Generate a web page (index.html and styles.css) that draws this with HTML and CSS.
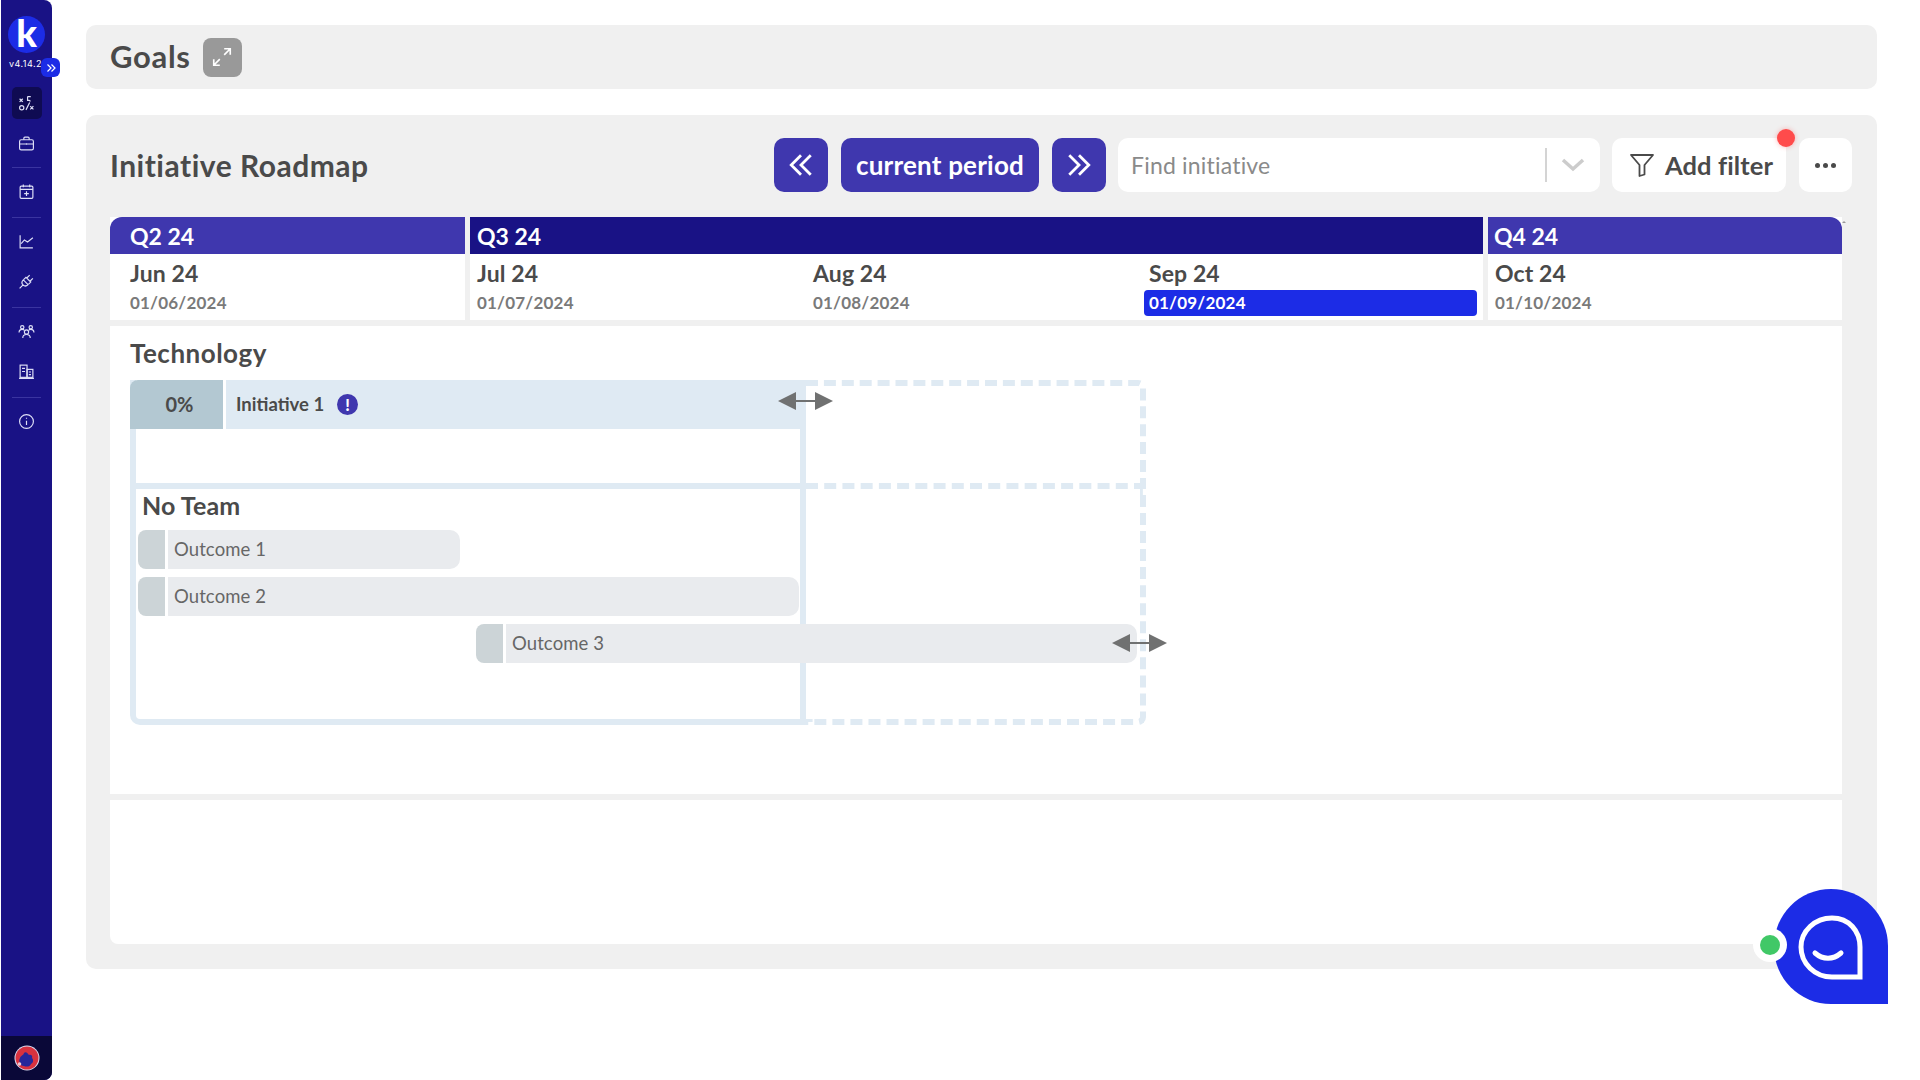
FILE: index.html
```html
<!DOCTYPE html>
<html lang="en">
<head>
<meta charset="utf-8">
<title>Goals</title>
<link rel="stylesheet" href="styles.css">
</head>
<body>
<div class="app">
  <nav class="sidebar">
    <div class="logo"><span>k</span></div>
    <div class="version">v4.14.2</div>
    <div class="collapse-tab"><svg viewBox="0 0 12 12" width="12" height="12"><path d="M2.500 2.500 6 6l-3.500 3.500M6.500 2.500 10 6l-3.500 3.500" fill="none" stroke="#fff" stroke-width="1.200"/></svg></div>
    <div class="nav-list">
      <div class="nav-item active"><svg class="nav-icon" viewBox="0 0 16 16"><path d="M1.500 3.500l3 3M4.500 3.500l-3 3M11.500 10.500l3 3M14.500 10.500l-3 3M7.500 14 11 7M9 1.500h3M9 1.500v3.500h1.500a1 1 0 0 1 1 1" /><circle cx="3.500" cy="12" r="2"/></svg></div>
      <div class="nav-item"><svg class="nav-icon" viewBox="0 0 16 16"><rect x="1.500" y="4.500" width="13" height="9.500" rx="1.500"/><path d="M5.500 4.500V3a1 1 0 0 1 1-1h3a1 1 0 0 1 1 1v1.500M1.500 8.500h13M8 7.800v1.400"/></svg></div>
      <div class="divider"></div>
      <div class="nav-item"><svg class="nav-icon" viewBox="0 0 16 16"><rect x="2" y="3" width="12" height="11.500" rx="1"/><path d="M2 6h12M5 1.500V4M11 1.500V4M8 7.800v4.400M5.800 10h4.400"/></svg></div>
      <div class="divider wide"></div>
      <div class="nav-item"><svg class="nav-icon" viewBox="0 0 16 16"><path d="M2 2v12h12M3 10l3-3.500 3 2L14 4.500"/></svg></div>
      <div class="nav-item"><svg class="nav-icon" viewBox="0 0 16 16"><path d="M1.500 14.500 5 11M5 6.500 9.500 11c-1.500 1.500-3.500 1.500-4.800.2C3.500 10 3.500 8 5 6.500zM5.500 6l2-2 4.500 4.500-2 2M8.500 4.500 11 2M11.500 7.500 14 5"/></svg></div>
      <div class="divider wide"></div>
      <div class="nav-item"><svg class="nav-icon" viewBox="0 0 16 16"><circle cx="8" cy="8.500" r="2"/><circle cx="4" cy="4" r="1.600"/><circle cx="12" cy="4" r="1.600"/><path d="M1 9c0-2 1.200-3 3-3 .8 0 1.400.2 1.800.6M15 9c0-2-1.200-3-3-3-.8 0-1.400.2-1.800.6M4.500 14c0-2 1.500-3.200 3.500-3.200s3.500 1.200 3.500 3.200"/></svg></div>
      <div class="nav-item"><svg class="nav-icon" viewBox="0 0 16 16"><rect x="2" y="2" width="6.500" height="11.500"/><rect x="8.500" y="6" width="5.500" height="7.500"/><path d="M1 14.500h14M3.800 5h2.800M3.800 8h2.800M10.200 8.500h2M10.200 11h2"/></svg></div>
      <div class="divider wide"></div>
      <div class="nav-item"><svg class="nav-icon" viewBox="0 0 16 16"><circle cx="8" cy="8" r="6.500"/><path d="M8 7.200v4M8 4.500v1"/></svg></div>
    </div>
    <div class="sidebar-foot">
      <svg viewBox="0 0 26 26" width="26" height="26"><circle cx="13" cy="13" r="12.500" fill="#d9dcf2"/><circle cx="13" cy="13" r="11.500" fill="#d8323f"/><path d="M6 13c1-3 3-2 4-5 2-2 4 1 5 2 2-1 4 1 3 3 2 2 1 5-1 6-1 3-5 3-7 2-2 0-4-1-4-3-1-2-1-3 0-5z" fill="#27279b"/><circle cx="5.500" cy="19" r="1.800" fill="#f0c8d0"/></svg>
    </div>
  </nav>

  <main class="content">
    <header class="goals-card">
      <h1 class="goals-title">Goals</h1>
      <button class="expand-btn"><svg viewBox="0 0 20 20" width="22" height="22"><path d="M2.500 17.500 8 12M12 8l5.500-5.500M12 2.500h5.500V8M2.500 12v5.500H8" fill="none" stroke="#fff" stroke-width="1.500"/></svg></button>
    </header>

    <section class="panel">
      <div class="toolbar">
        <h2 class="panel-title">Initiative Roadmap</h2>
        <button class="period-btn square"><svg viewBox="0 0 24 24" width="26" height="26"><path d="M12 3 3 12l9 9M21 3l-9 9 9 9" fill="none" stroke="#fff" stroke-width="2.600"/></svg></button>
        <button class="period-btn">current period</button>
        <button class="period-btn square"><svg viewBox="0 0 24 24" width="26" height="26"><path d="M3 3l9 9-9 9M12 3l9 9-9 9" fill="none" stroke="#fff" stroke-width="2.600"/></svg></button>
        <div class="find">
          <span class="find-text">Find initiative</span>
          <span class="find-sep"></span>
          <svg viewBox="0 0 24 14" width="24" height="14"><path d="M2 2l10 9 10-9" fill="none" stroke="#cccccc" stroke-width="3.500"/></svg>
        </div>
        <button class="white-btn filter"><svg viewBox="0 0 26 26" width="26" height="26"><path d="M2 3h22l-8.500 10v9.500l-5 1.500V13z" fill="none" stroke="#4a4a4a" stroke-width="1.800" stroke-linejoin="round"/></svg>Add filter<span class="red-dot"></span></button>
        <button class="white-btn more"><span></span><span></span><span></span></button>
      </div>

      <div class="timeline">
        <div class="quarter">
          <div class="q-head light first">Q2 24</div>
          <div class="months">
            <div class="month"><div class="m-name">Jun 24</div><div class="m-date">01/06/2024</div></div>
          </div>
        </div>
        <div class="quarter">
          <div class="q-head">Q3 24</div>
          <div class="months">
            <div class="month"><div class="m-name">Jul 24</div><div class="m-date">01/07/2024</div></div>
            <div class="month"><div class="m-name">Aug 24</div><div class="m-date">01/08/2024</div></div>
            <div class="month"><div class="m-name">Sep 24</div><div class="m-date now">01/09/2024</div></div>
          </div>
        </div>
        <div class="quarter">
          <div class="q-head light last">Q4 24</div>
          <div class="months">
            <div class="month"><div class="m-name">Oct 24</div><div class="m-date">01/10/2024</div></div>
          </div>
        </div>
        <span class="scroll-mark"></span>
      </div>

      <div class="lane">
        <h3 class="lane-title">Technology</h3>
        <div class="frame">
          <div class="cell solid top">
            <div class="initiative">
              <div class="pct">0%</div>
              <div class="init-body">Initiative 1 <span class="alert">!</span></div>
              <svg class="resize" viewBox="0 0 55 20"><path d="M0 10 18 1v8h19V1l18 9-18 9v-8H18v8z" fill="#707171"/></svg>
            </div>
          </div>
          <div class="cell dashed top-d"></div>
          <div class="cell solid bottom">
            <div class="team">No Team</div>
            <div class="outcome o1"><div class="o-tab"></div><div class="o-body">Outcome 1</div></div>
            <div class="outcome o2"><div class="o-tab"></div><div class="o-body">Outcome 2</div></div>
            <div class="outcome o3"><div class="o-tab"></div><div class="o-body">Outcome 3</div>
              <svg class="resize" viewBox="0 0 55 20"><path d="M0 10 18 1v8h19V1l18 9-18 9v-8H18v8z" fill="#707171"/></svg>
            </div>
          </div>
          <div class="cell dashed bottom-d"></div>
        </div>
      </div>
      <div class="lane-empty"></div>
    </section>
  </main>

  <div class="chat">
    <svg viewBox="0 0 114 115" width="114" height="115"><path d="M27 58a31 29 0 0 1 31-29c17 0 28 13 28 29v30H58a31 30 0 0 1-31-30z" fill="none" stroke="#fff" stroke-width="5"/><path d="M41 64c8 7 18 7 26 0" fill="none" stroke="#fff" stroke-width="5" stroke-linecap="round"/></svg>
    <span class="chat-dot"></span>
  </div>
</div>
</body>
</html>
```
FILE: styles.css
```css
* { box-sizing: border-box; }
html, body { margin: 0; height: 100%; background: #fff; }
body { font-family: "Lato", "Open Sans", sans-serif; color: #4a4a4a; overflow: hidden; }
h1, h2, h3 { margin: 0; }
button { font: inherit; border: 0; padding: 0; }

.app { display: flex; height: 1080px; position: relative; padding-left: 1px; }

/* Sidebar */
.sidebar { width: 51px; flex: none; background: #191285; border-radius: 0 8px 8px 0; display: flex; flex-direction: column; align-items: center; position: relative; padding-top: 16px; overflow: visible; }
.logo { width: 37px; height: 37px; border-radius: 50%; background: #1c2ce6; display: flex; align-items: center; justify-content: center; color: #fff; font-weight: 900; font-size: 38px; line-height: 37px; flex: none; }
.logo span { position: relative; top: -2px; }
.version { color: #fff; font-size: 9px; letter-spacing: .5px; margin-top: 5px; height: 12px; line-height: 12px; white-space: nowrap; font-family: "Inter", sans-serif; margin-right: 2px; flex: none; }
.collapse-tab { position: absolute; left: 40px; top: 58px; width: 19px; height: 19px; border-radius: 6px; background: #1c2ce6; display: flex; align-items: center; justify-content: center; }
.nav-list { margin-top: 17px; display: flex; flex-direction: column; align-items: center; gap: 8px; }
.nav-item { width: 30px; height: 32px; display: flex; align-items: center; justify-content: center; border-radius: 5px; flex: none; }
.nav-item.active { background: #0f0b52; }
.nav-icon { width: 17px; height: 17px; fill: none; stroke: #dfe0f7; stroke-width: 1.100; }
.divider { width: 29px; height: 1px; background: #3a34a0; margin-bottom: -1px; flex: none; }
.divider.wide { margin-top: 2px; margin-bottom: -1px; }
.sidebar-foot { margin-top: auto; width: 100%; height: 44px; background: #0a0838; display: flex; align-items: center; justify-content: center; border-radius: 0 0 8px 0; }

/* Main */
.content { flex: 1; min-width: 0; padding: 25px 43px 0 34px; }
.goals-card { height: 64px; background: #f0f0f0; border-radius: 10px; display: flex; align-items: center; padding-left: 24px; gap: 12px; }
.goals-title { font-size: 31px; font-weight: 700; line-height: 1; letter-spacing: .7px; position: relative; top: -1px; }
.expand-btn { width: 39px; height: 39px; border-radius: 8px; background: #999; display: flex; align-items: center; justify-content: center; }

.panel { margin-top: 26px; height: 854px; background: #f0f0f0; border-radius: 10px; padding: 23px 25px 25px 24px; display: flex; flex-direction: column; position: relative; }
.toolbar { display: flex; align-items: center; height: 54px; gap: 13px; flex: none; }
.panel-title { font-size: 30px; font-weight: 700; letter-spacing: .5px; margin-right: auto; }
.period-btn { height: 54px; border-radius: 10px; background: #3f37ae; color: #fff; font-size: 26px; font-weight: 700; width: 198px; display: flex; align-items: center; justify-content: center; white-space: nowrap; letter-spacing: .2px; }
.period-btn.square { width: 54px; }
.find { width: 482px; height: 54px; margin-left: -1px; background: #fff; border-radius: 10px; display: flex; align-items: center; padding: 0 15px 0 13px; }
.find-text { flex: 1; font-size: 23px; color: #8a8a8a; letter-spacing: .2px; }
.find-sep { width: 2px; height: 34px; background: #d4d4d4; margin-right: 14px; }
.white-btn { height: 54px; background: #fff; border-radius: 10px; color: #4a4a4a; display: flex; align-items: center; justify-content: center; position: relative; }
.filter { width: 174px; margin-left: -1px; gap: 10px; font-size: 25.500px; font-weight: 700; letter-spacing: .1px; padding-left: 4px; }
.more { width: 53px; gap: 3px; }
.more span { width: 5px; height: 5px; border-radius: 50%; background: #4a4a4a; }
.red-dot { position: absolute; right: -9px; top: -9px; width: 18px; height: 18px; border-radius: 50%; background: #ff4b4b; box-shadow: 0 0 5px rgba(255, 75, 75, .4); }

/* Timeline header */
.timeline { margin-top: 25px; display: grid; grid-template-columns: 355px 1013px 354px; column-gap: 5px; width: 1732px; flex: none; position: relative; }
.quarter { background: #fff; height: 103px; }
.q-head { height: 37px; background: #191285; color: #fff; font-size: 23px; font-weight: 700; line-height: 38px; padding-left: 7px; letter-spacing: 0; }
.q-head.light { background: #3f37ae; }
.q-head.first { border-radius: 12px 0 0 0; padding-left: 20px; }
.q-head.last { border-radius: 0 12px 0 0; padding-left: 6px; }
.months { display: flex; }
.month { flex: 0 0 336px; min-width: 0; padding: 5px 6px 0 7px; }
.month:last-child { flex: 1; }
.quarter:first-child .month { padding-left: 20px; }
.quarter:last-child .month { padding-left: 6px; }
.m-name { font-size: 23px; font-weight: 700; line-height: 28px; letter-spacing: .1px; }
.m-date { font-size: 17px; font-weight: 700; color: #7a7a7a; line-height: 26px; height: 26px; margin-top: 3px; letter-spacing: .2px; }
.m-date.now { background: #1c2ce6; color: #fff; border-radius: 4px; margin-left: -5px; padding-left: 5px; }
.scroll-mark { position: absolute; right: -4px; top: 4px; width: 0; height: 0; border-left: 2px solid transparent; border-right: 2px solid transparent; border-bottom: 2px solid #999; }

/* Lanes */
.lane { margin-top: 6px; width: 1732px; height: 468px; background: #fff; padding: 11px 20px 0; flex: none; }
.lane-title { font-size: 26px; font-weight: 700; line-height: 32px; letter-spacing: .5px; margin-bottom: 11px; color: #4a4a4a; }
.lane-empty { margin-top: 6px; width: 1732px; height: 144px; background: #fff; border-radius: 0 0 8px 8px; flex: none; }

.frame { display: grid; grid-template-columns: 676px 340px; grid-template-rows: 109px 236px; width: 1016px; }
.cell { min-width: 0; }
.solid { border: 6px solid #dfeaf3; border-top: 0; }
.solid.top { border-bottom: 6px solid #dfeaf3; }
.solid.bottom { border-radius: 0 0 0 10px; padding: 0 0 0 2px; }
.dashed { border: 6px dashed #dfeaf3; border-left: 0; }
.top-d { border-radius: 0 8px 0 0; }
.bottom-d { border-top: 0; border-radius: 0 0 8px 0; }

.initiative { display: flex; height: 49px; width: 671px; margin-left: -6px; gap: 3px; position: relative; }
.pct { width: 93px; background: #b3c8d2; border-radius: 8px 0 0 0; text-align: center; line-height: 49px; font-size: 20px; font-weight: 700; padding-left: 6px; }
.init-body { flex: 1; background: #dfeaf3; padding-left: 10px; line-height: 49px; font-size: 18.500px; font-weight: 700; display: flex; align-items: center; gap: 13px; }
.alert { width: 21px; height: 21px; border-radius: 50%; background: #3f37ae; color: #fff; font-size: 16px; font-weight: 900; line-height: 21px; text-align: center; }
.resize { position: absolute; width: 55px; height: 20px; right: -32px; top: 11px; }

.team { font-size: 25px; font-weight: 700; line-height: 32px; padding-left: 4px; margin-bottom: 9px; letter-spacing: .1px; }
.outcome { display: flex; height: 39px; gap: 3px; margin-bottom: 8px; position: relative; }
.o1 { width: 322px; }
.o2 { width: 661px; }
.o3 { width: 661px; margin-left: 338px; }
.o-tab { width: 27px; background: #ccd4d7; border-radius: 8px 0 0 8px; }
.o-body { flex: 1; background: #e9ebee; border-radius: 0 10px 10px 0; padding-left: 6px; line-height: 39px; font-size: 18.500px; color: #666; letter-spacing: .1px; }
.o3 .resize { right: -30px; top: 9px; }

/* Chat */
.chat { position: absolute; left: 1774px; top: 889px; width: 114px; height: 115px; background: #1c2ce6; border-radius: 57px 57px 0 57px; }
.chat svg { display: block; }
.chat-dot { position: absolute; left: -14px; top: 46px; width: 20px; height: 20px; border-radius: 50%; background: #41c867; box-shadow: 0 0 0 7px #fff; }
```
